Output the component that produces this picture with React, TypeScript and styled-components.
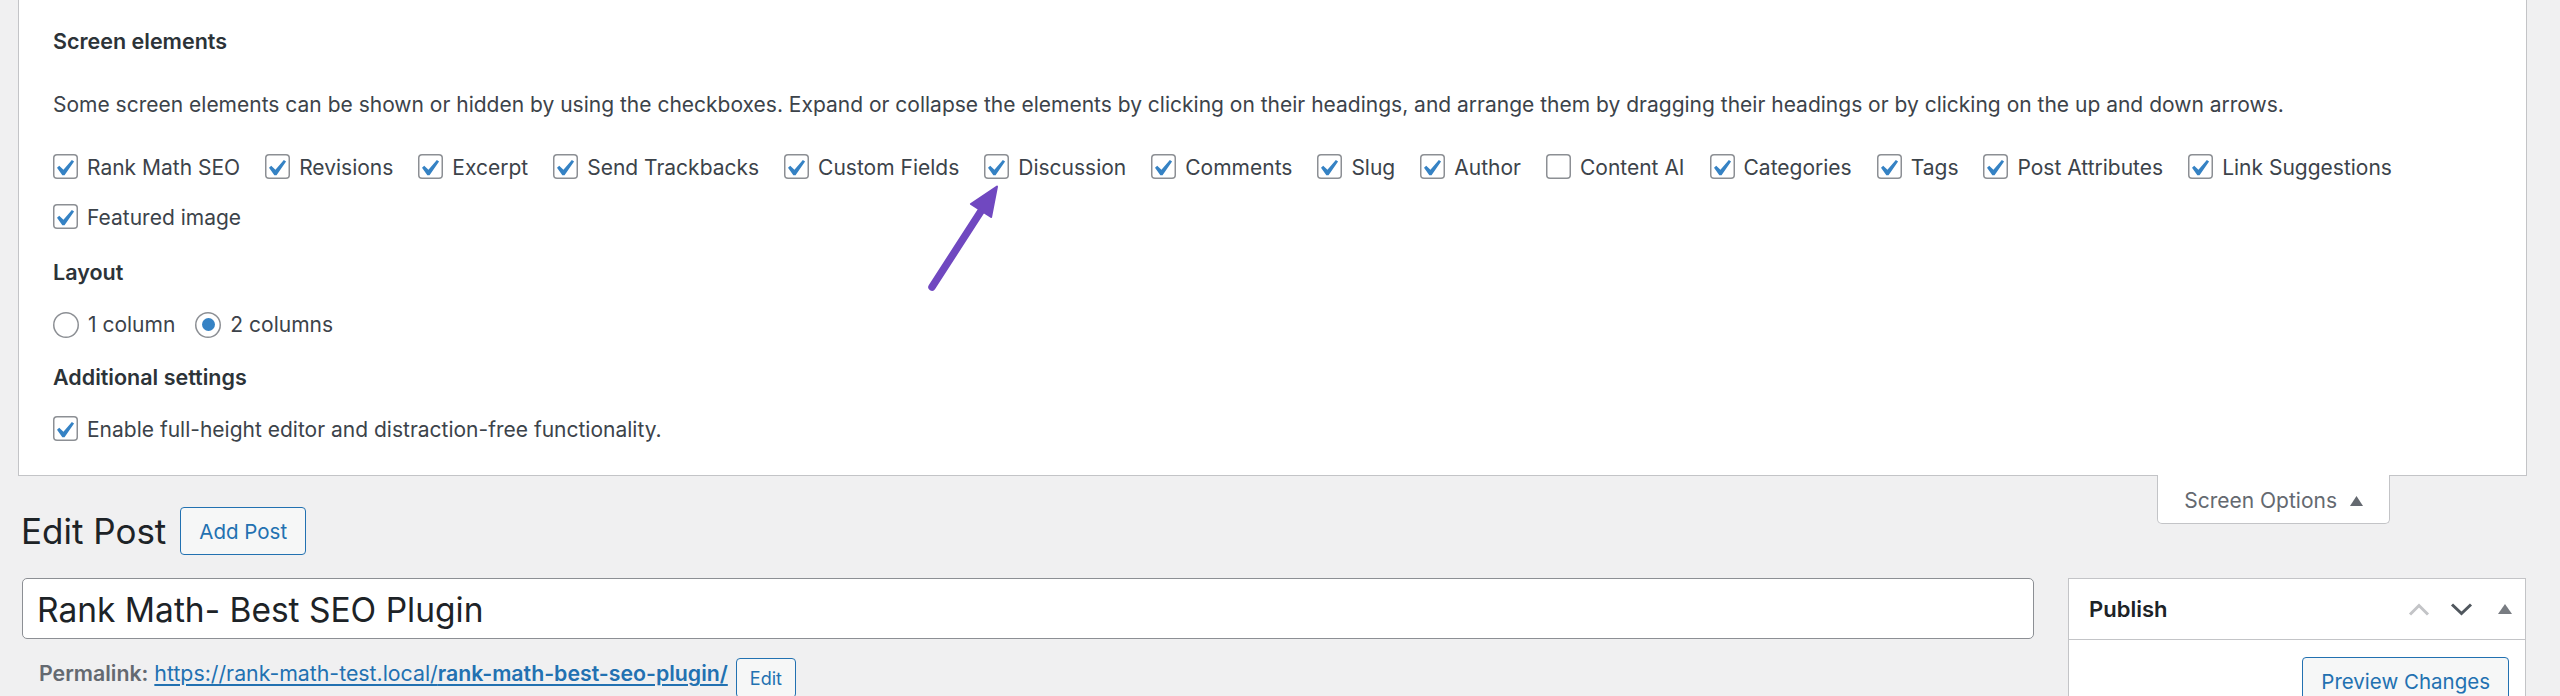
import React from "react";
import styled, { createGlobalStyle } from "styled-components";

const GlobalStyle = createGlobalStyle`
  html, body { margin: 0; padding: 0; overflow: hidden; }
  body {
    background: #f0f0f1;
    font-family: Inter, "Noto Sans", sans-serif;
    color: #3c434a;
  }
  * { box-sizing: border-box; }
`;

const Page = styled.div`
  position: relative;
  width: 2560px;
  height: 696px;
  overflow: hidden;
`;

const ScreenMeta = styled.div`
  margin: 0 33px 0 18px;
  background: #fff;
  border: 1px solid #c3c4c7;
  border-top: none;
  padding: 26px 34px 34px 34px;
`;

const Legend = styled.div<{ $mt?: number }>`
  font-size: 21.5px;
  font-weight: 600;
  line-height: 30px;
  color: #2c3338;
  margin-top: ${(p) => p.$mt ?? 0}px;
`;

const Description = styled.p`
  margin: 34px 0 0;
  font-size: 21px;
  line-height: 30px;
  color: #3c434a;
`;

const PrefsList = styled.div<{ $mt: number }>`
  display: flex;
  flex-wrap: wrap;
  column-gap: 25px;
  row-gap: 25px;
  margin-top: ${(p) => p.$mt}px;
`;

const Option = styled.label`
  display: inline-flex;
  align-items: center;
  gap: 9px;
  height: 25px;
  font-size: 21px;
  line-height: 25px;
  color: #3c434a;
  white-space: nowrap;
`;

const OptionText = styled.span`
  padding-top: 2px;
`;

const Box = styled.span`
  display: inline-flex;
  width: 25px;
  height: 25px;
  flex: none;
  border-radius: 4px;
  background: #fff;
  box-shadow: inset 0 0 0 1.5px #8c8f94;
  svg { width: 25px; height: 25px; display: block; }
`;

const Radio = styled.span`
  display: inline-flex;
  align-items: center;
  justify-content: center;
  width: 26px;
  height: 26px;
  flex: none;
  border-radius: 50%;
  background: #fff;
  box-shadow: inset 0 0 0 1.5px #8c8f94;
`;

const RadioDot = styled.span`
  width: 13px;
  height: 13px;
  border-radius: 50%;
  background: #3582c4;
`;

const RadioRow = styled.div`
  display: flex;
  gap: 20px;
  margin-top: 25px;
`;

const TopRow = styled.div`
  display: flex;
  justify-content: space-between;
  align-items: flex-start;
  padding: 0 170px 0 21px;
`;

const Header = styled.div`
  display: flex;
  align-items: center;
  gap: 14px;
  margin-top: 31px;
`;

const Title = styled.h1`
  margin: 0;
  font-size: 35px;
  font-weight: 400;
  line-height: 48px;
  color: #1d2327;
`;

const OutlineButton = styled.button<{ $h: number; $fs: number; $px: number }>`
  height: ${(p) => p.$h}px;
  padding: 0 ${(p) => p.$px}px;
  font-family: Inter, "Noto Sans", sans-serif;
  font-size: ${(p) => p.$fs}px;
  color: #2271b1;
  background: #f6f7f7;
  border: 1.5px solid #2271b1;
  border-radius: 4px;
  flex: none;
`;

const Tab = styled.div`
  margin-top: -1px;
  height: 49px;
  display: flex;
  align-items: center;
  gap: 13px;
  padding: 3px 26px 0;
  background: #fff;
  border: 1px solid #c3c4c7;
  border-top: none;
  border-radius: 0 0 5px 5px;
  font-size: 21px;
  color: #646970;
`;

const Columns = styled.div`
  display: flex;
  gap: 34px;
  padding: 0 34px 0 22px;
  margin-top: 23px;
`;

const Main = styled.div`
  flex: 1;
  min-width: 0;
`;

const TitleInput = styled.div`
  height: 61px;
  display: flex;
  align-items: center;
  padding: 3px 14px 0;
  background: #fff;
  border: 1.5px solid #8c8f94;
  border-radius: 5px;
  font-size: 33.5px;
  color: #1d2327;
`;

const PermalinkRow = styled.div`
  display: flex;
  align-items: flex-start;
  gap: 8px;
  margin-top: 19px;
  padding-left: 17px;
  font-size: 21.3px;
  line-height: 30px;
`;

const PermalinkLabel = styled.strong`
  font-weight: 600;
  color: #646970;
`;

const Link = styled.a`
  color: #2271b1;
  text-decoration: underline;
  text-underline-offset: 3px;
`;

const LinkStrong = styled.span`
  font-weight: 600;
`;

const Sidebar = styled.div`
  width: 458px;
  flex: none;
`;

const Postbox = styled.div`
  background: #fff;
  border: 1px solid #c3c4c7;
`;

const PostboxHeader = styled.div`
  height: 61px;
  display: flex;
  align-items: center;
  justify-content: space-between;
  padding: 0 13px 0 20px;
  border-bottom: 1px solid #c3c4c7;
`;

const PostboxTitle = styled.h2`
  margin: 0;
  font-size: 22px;
  font-weight: 600;
  color: #1d2327;
`;

const HandleGroup = styled.div`
  display: flex;
  align-items: center;
  gap: 20px;
`;

const HandleIcon = styled.svg<{ $ml?: number }>`
  display: block;
  margin-left: ${(p) => p.$ml ?? 0}px;
`;

const PostboxBody = styled.div`
  display: flex;
  justify-content: flex-end;
  padding: 17px 16px;
`;

const Annotation = styled.svg`
  position: absolute;
  left: 920px;
  top: 175px;
  width: 90px;
  height: 120px;
  overflow: visible;
`;

const CheckMark = () => (
  <svg viewBox="3.33 1.22 15.24 15.24">
    <path d="M14.83 4.89l1.34.94-5.81 8.38H9.02L5.78 9.67l1.34-1.25 2.57 2.4z" fill="#3582c4" />
  </svg>
);

const Check: React.FC<{ label: string; checked?: boolean }> = ({ label, checked = true }) => (
  <Option>
    <Box>{checked && <CheckMark />}</Box>
    <OptionText>{label}</OptionText>
  </Option>
);

const elements: [string, boolean][] = [
  ["Rank Math SEO", true],
  ["Revisions", true],
  ["Excerpt", true],
  ["Send Trackbacks", true],
  ["Custom Fields", true],
  ["Discussion", true],
  ["Comments", true],
  ["Slug", true],
  ["Author", true],
  ["Content AI", false],
  ["Categories", true],
  ["Tags", true],
  ["Post Attributes", true],
  ["Link Suggestions", true],
  ["Featured image", true],
];

export default function App() {
  return (
    <Page>
      <GlobalStyle />
      <ScreenMeta>
        <Legend>Screen elements</Legend>
        <Description>
          Some screen elements can be shown or hidden by using the checkboxes. Expand or collapse the elements by
          clicking on their headings, and arrange them by dragging their headings or by clicking on the up and down
          arrows.
        </Description>
        <PrefsList $mt={34}>
          {elements.map(([l, c]) => (
            <Check key={l} label={l} checked={c} />
          ))}
        </PrefsList>
        <Legend $mt={28}>Layout</Legend>
        <RadioRow>
          <Option>
            <Radio />
            <span>1 column</span>
          </Option>
          <Option>
            <Radio>
              <RadioDot />
            </Radio>
            <span>2 columns</span>
          </Option>
        </RadioRow>
        <Legend $mt={25}>Additional settings</Legend>
        <PrefsList $mt={24}>
          <Check label="Enable full-height editor and distraction-free functionality." />
        </PrefsList>
      </ScreenMeta>

      <TopRow>
        <Header>
          <Title>Edit Post</Title>
          <OutlineButton $h={48} $fs={20.5} $px={18}>Add Post</OutlineButton>
        </Header>
        <Tab>
          <span>Screen Options</span>
          <svg width="13" height="10" viewBox="0 0 13 10">
            <path d="M6.5 0L13 10H0z" fill="#646970" />
          </svg>
        </Tab>
      </TopRow>

      <Columns>
        <Main>
          <TitleInput>Rank Math- Best SEO Plugin</TitleInput>
          <PermalinkRow>
            <span>
              <PermalinkLabel>Permalink:</PermalinkLabel>{" "}
              <Link href="#">
                https://rank-math-test.local/<LinkStrong>rank-math-best-seo-plugin/</LinkStrong>
              </Link>
            </span>
            <OutlineButton $h={40} $fs={18} $px={13}>Edit</OutlineButton>
          </PermalinkRow>
        </Main>
        <Sidebar>
          <Postbox>
            <PostboxHeader>
              <PostboxTitle>Publish</PostboxTitle>
              <HandleGroup>
                <HandleIcon width="22" height="13" viewBox="0 0 22 13">
                  <path d="M2 11.5L11 2.5L20 11.5" fill="none" stroke="#c3c4c7" strokeWidth="3" />
                </HandleIcon>
                <HandleIcon width="23" height="13" viewBox="0 0 23 13">
                  <path d="M2 1.5L11.5 10.5L21 1.5" fill="none" stroke="#50575e" strokeWidth="3" />
                </HandleIcon>
                <HandleIcon $ml={5} width="14" height="10" viewBox="0 0 14 10">
                  <path d="M7 0L14 10H0z" fill="#787c82" />
                </HandleIcon>
              </HandleGroup>
            </PostboxHeader>
            <PostboxBody>
              <OutlineButton $h={48} $fs={20.5} $px={18}>Preview Changes</OutlineButton>
            </PostboxBody>
          </Postbox>
        </Sidebar>
      </Columns>

      <Annotation viewBox="0 0 90 120">
        <line x1="12" y1="112" x2="63" y2="33" stroke="#7048c0" strokeWidth="7.5" strokeLinecap="round" />
        <path d="M77 11.5L50.9 29L71.1 42Z" fill="#7048c0" stroke="#7048c0" strokeWidth="2" strokeLinejoin="round" />
      </Annotation>
    </Page>
  );
}
